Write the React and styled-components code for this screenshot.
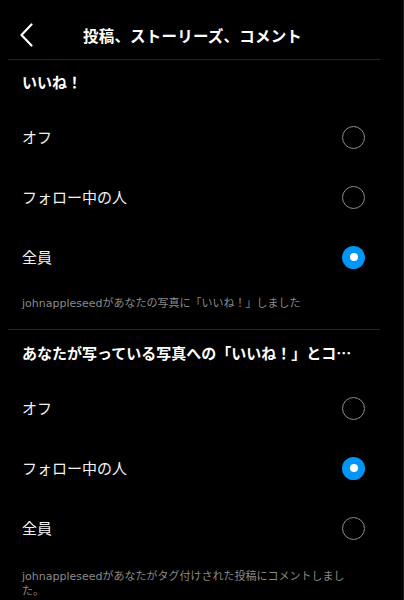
import { useState } from "react";
import styled, { createGlobalStyle } from "styled-components";

const GlobalStyle = createGlobalStyle`
  html, body {
    margin: 0;
    padding: 0;
    background: #000;
  }
  body {
    font-family: "Noto Sans", "Noto Sans CJK JP", sans-serif;
    color: #fff;
    -webkit-font-smoothing: antialiased;
  }
`;

const Page = styled.div`
  width: 404px;
  height: 600px;
  box-sizing: border-box;
  background: #000;
  border-right: 1px solid #1c1c1c;
  overflow: hidden;
`;

const Header = styled.header`
  display: flex;
  align-items: center;
  box-sizing: border-box;
  height: 59px;
  padding: 10px 0 0 20px;
`;

const BackButton = styled.button`
  display: flex;
  align-items: center;
  justify-content: center;
  width: 13px;
  height: 24px;
  padding: 0;
  border: none;
  background: none;
  color: #fff;
  cursor: pointer;
`;

const Title = styled.h1`
  margin: 3px 0 0 50px;
  font-size: 15.5px;
  font-weight: 700;
  line-height: 22px;
  letter-spacing: 0.2px;
`;

const Divider = styled.hr`
  margin: 0 23px 0 8px;
  border: none;
  height: 1px;
  background: #262626;
`;

const SectionTitle = styled.h2`
  margin: 0;
  padding: ${(p) => p.$top}px 48px 15px 22px;
  font-family: "Noto Sans CJK JP", sans-serif;
  font-size: 15px;
  font-weight: 700;
  line-height: 20px;
  white-space: nowrap;
  overflow: hidden;
  text-overflow: ellipsis;
`;

const Row = styled.label`
  display: flex;
  align-items: center;
  justify-content: space-between;
  height: 60px;
  padding: 0 38px 0 22px;
  cursor: pointer;
`;

const RowLabel = styled.span`
  font-size: 15px;
  line-height: 20px;
  color: #f2f2f2;
`;

const Radio = styled.span`
  box-sizing: border-box;
  width: 23px;
  height: 23px;
  border-radius: 50%;
  display: flex;
  align-items: center;
  justify-content: center;
  border: ${(p) => (p.$checked ? "none" : "1.5px solid #8e8e8e")};
  background: ${(p) => (p.$checked ? "#0095f6" : "transparent")};

  &::after {
    content: "";
    display: ${(p) => (p.$checked ? "block" : "none")};
    width: 8px;
    height: 8px;
    border-radius: 50%;
    background: #fff;
  }
`;

const Caption = styled.p`
  margin: 0;
  padding: ${(p) => p.$top}px 48px 18px 22px;
  font-family: "DejaVu Sans", "Noto Sans CJK JP", sans-serif;
  font-size: 11px;
  line-height: 15px;
  color: #8a8a8a;
`;

const OPTIONS = ["オフ", "フォロー中の人", "全員"];

function Section({ title, caption, value, onChange, titleTop, captionTop }) {
  return (
    <section>
      <SectionTitle $top={titleTop}>{title}</SectionTitle>
      {OPTIONS.map((opt) => (
        <Row key={opt} onClick={() => onChange(opt)}>
          <RowLabel>{opt}</RowLabel>
          <Radio $checked={value === opt} />
        </Row>
      ))}
      <Caption $top={captionTop}>{caption}</Caption>
    </section>
  );
}

export default function App() {
  const [likes, setLikes] = useState("全員");
  const [tagged, setTagged] = useState("フォロー中の人");

  return (
    <Page>
      <GlobalStyle />
      <Header>
        <BackButton aria-label="戻る">
          <svg width="13" height="24" viewBox="0 0 13 24" fill="none">
            <polyline
              points="11.5,1.5 1.5,12 11.5,22.5"
              stroke="currentColor"
              strokeWidth="2.2"
              strokeLinecap="round"
              strokeLinejoin="round"
            />
          </svg>
        </BackButton>
        <Title>投稿、ストーリーズ、コメント</Title>
      </Header>
      <Divider />
      <Section
        title="いいね！"
        caption="johnappleseedがあなたの写真に「いいね！」しました"
        value={likes}
        onChange={setLikes}
        titleTop={12}
        captionTop={9}
      />
      <Divider />
      <Section
        title="あなたが写っている写真への「いいね！」とコメント"
        caption="johnappleseedがあなたがタグ付けされた投稿にコメントしました。"
        value={tagged}
        onChange={setTagged}
        titleTop={13}
        captionTop={11}
      />
    </Page>
  );
}
